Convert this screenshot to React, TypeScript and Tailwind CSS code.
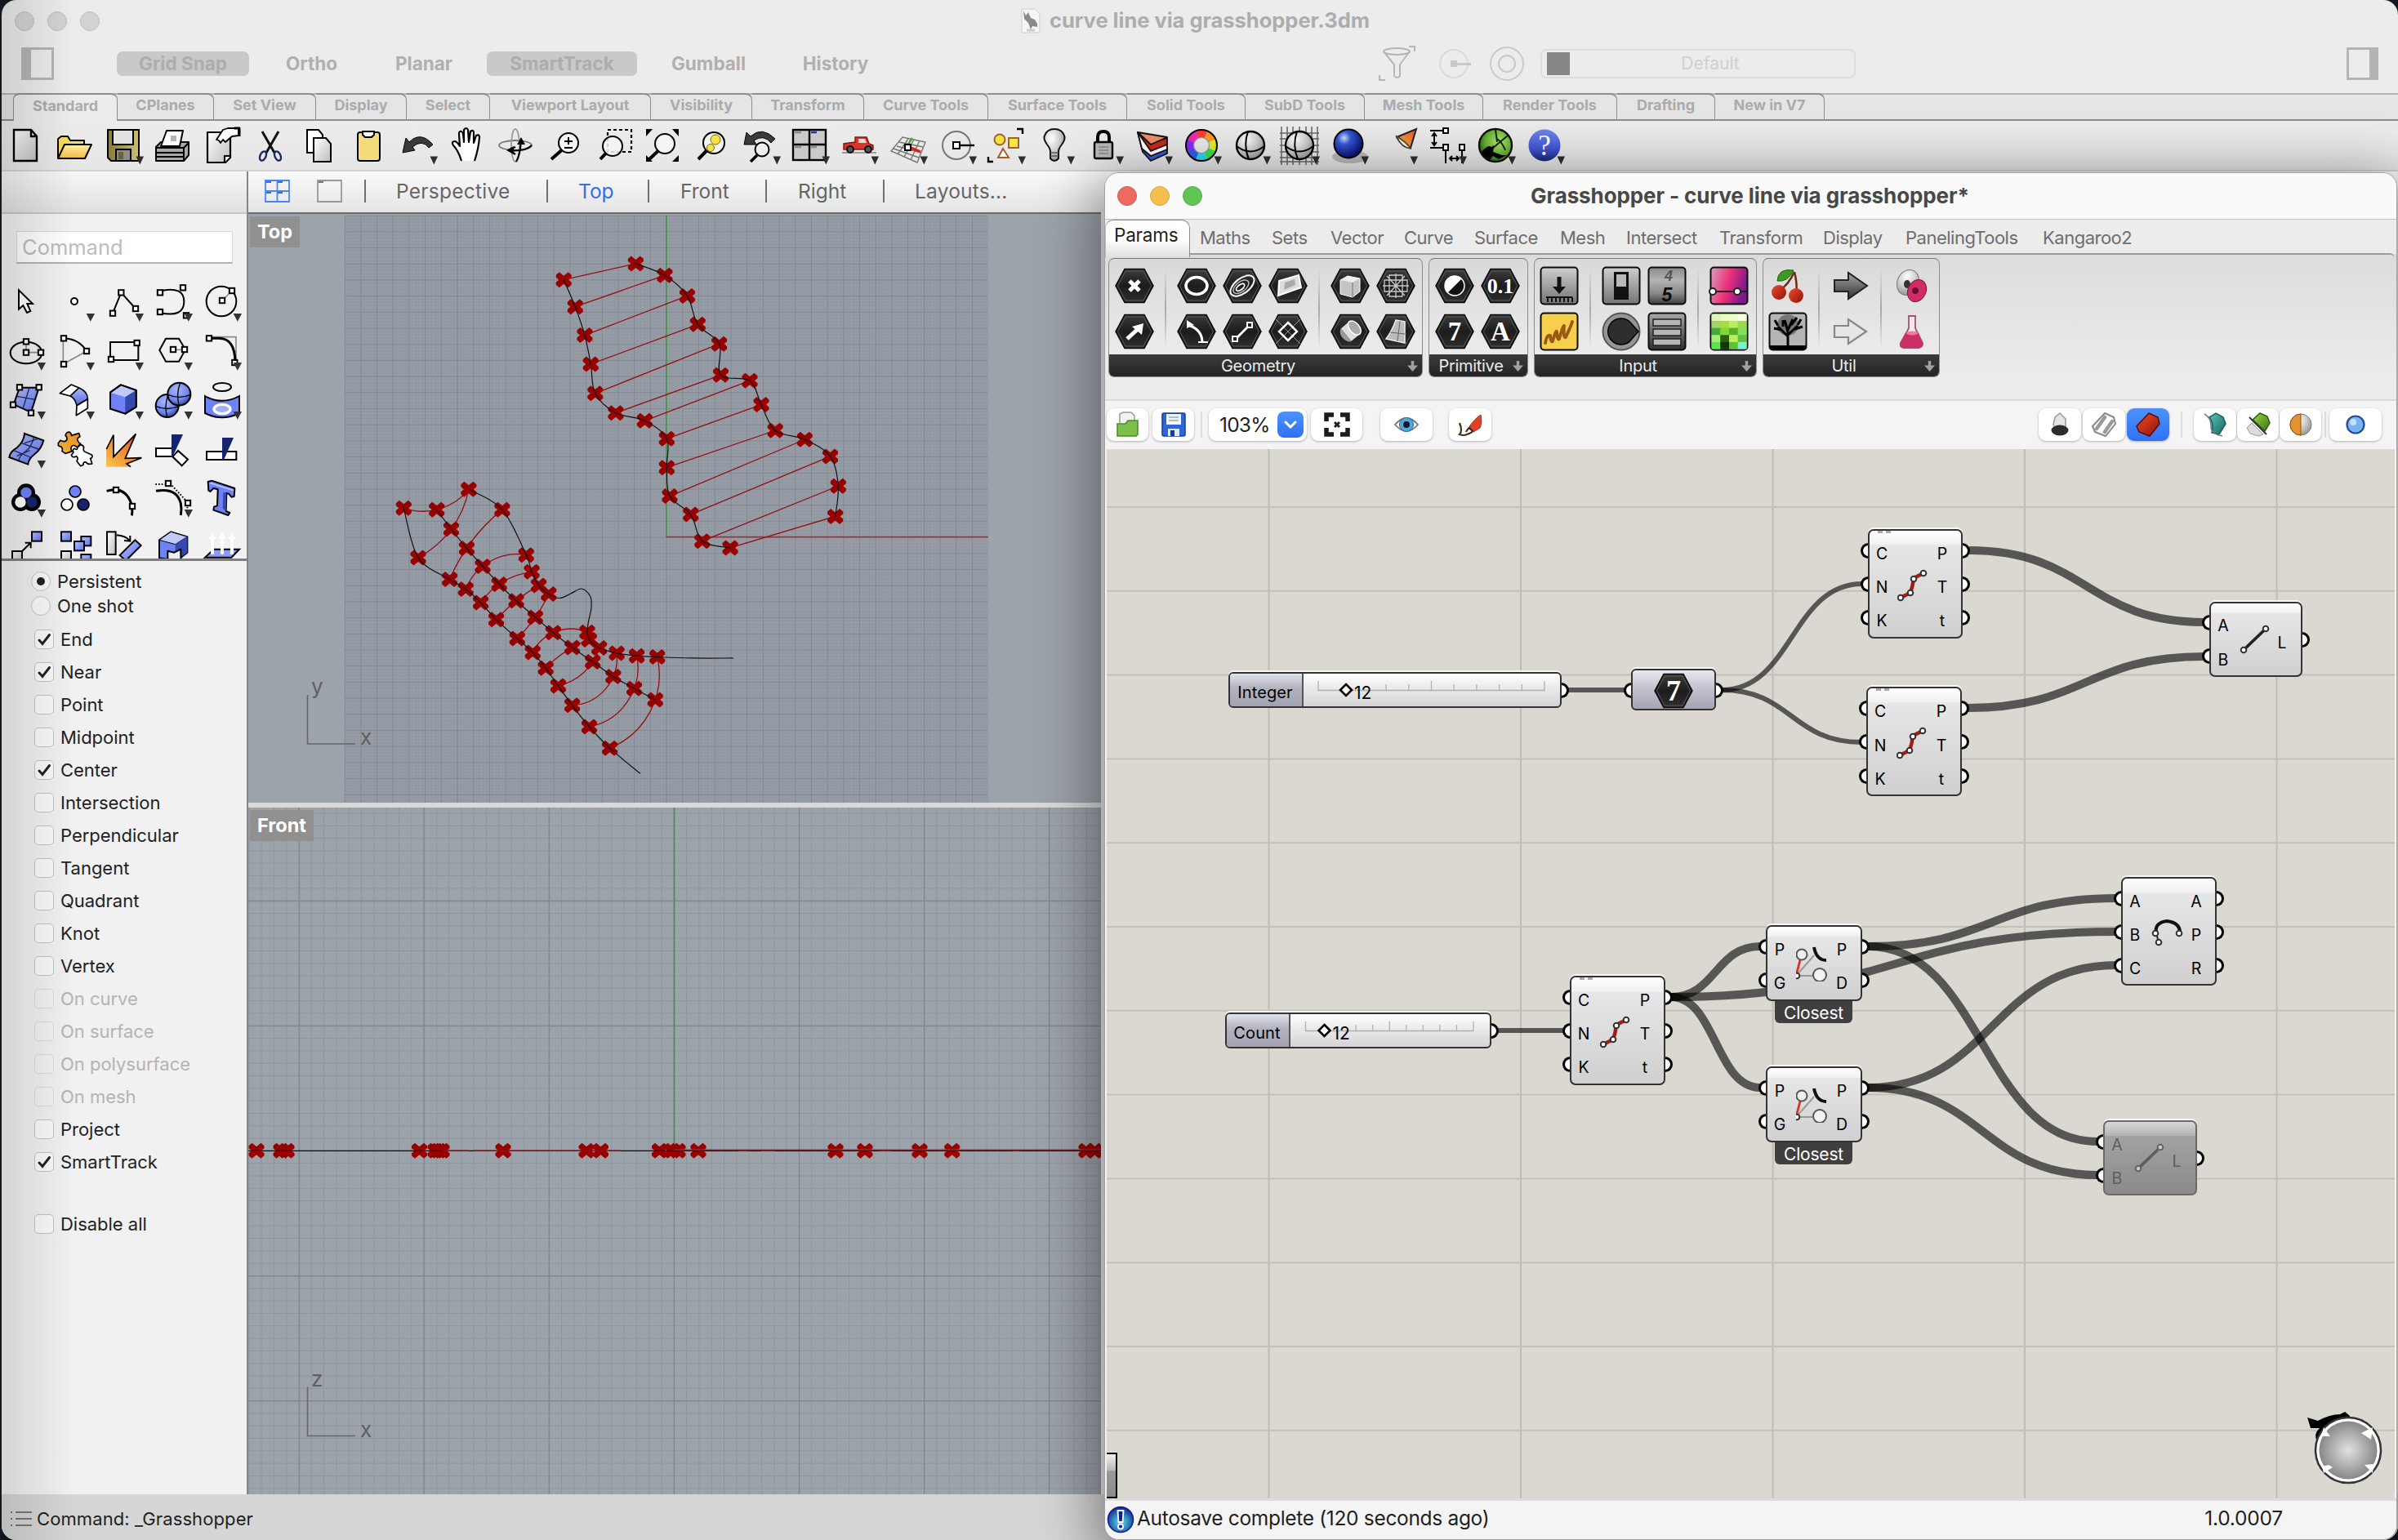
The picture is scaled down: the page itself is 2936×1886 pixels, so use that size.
import React from "react";

type Pt = [number, number];

/* ---------- shared gradients ---------- */

const Defs = () => (
  <svg width="0" height="0" className="absolute">
    <defs>
      <linearGradient id="paper" x1="0" y1="0" x2="1" y2="1"><stop offset="0" stopColor="#fff" /><stop offset="1" stopColor="#bdbdbd" /></linearGradient>
      <linearGradient id="yellow" x1="0" y1="0" x2="0" y2="1"><stop offset="0" stopColor="#fff3a0" /><stop offset="1" stopColor="#f2b84a" /></linearGradient>
      <linearGradient id="olive" x1="0" y1="0" x2="1" y2="0"><stop offset="0" stopColor="#8b7b35" /><stop offset="1" stopColor="#cdbf77" /></linearGradient>
      <linearGradient id="blue" x1="0" y1="0" x2="0" y2="1"><stop offset="0" stopColor="#a9b8ff" /><stop offset="1" stopColor="#5468d8" /></linearGradient>
      <linearGradient id="blueD" x1="0" y1="0" x2="1" y2="1"><stop offset="0" stopColor="#b8c4fb" /><stop offset="1" stopColor="#5b70ee" /></linearGradient>
      <linearGradient id="orange" x1="0" y1="1" x2="1" y2="0"><stop offset="0" stopColor="#f7b733" /><stop offset="1" stopColor="#e8542a" /></linearGradient>
      <linearGradient id="puzzle" x1="0" y1="1" x2="1" y2="0"><stop offset="0" stopColor="#f7b733" /><stop offset="1" stopColor="#ea8a2a" /></linearGradient>
      <linearGradient id="fire" x1="0" y1="1" x2="1" y2="0"><stop offset="0" stopColor="#f9c84a" /><stop offset="0.6" stopColor="#f07a30" /><stop offset="1" stopColor="#d9301c" /></linearGradient>
      <linearGradient id="help" x1="0" y1="0" x2="0" y2="1"><stop offset="0" stopColor="#6f86ef" /><stop offset="0.6" stopColor="#4356d4" /><stop offset="1" stopColor="#1c2674" /></linearGradient>
      <radialGradient id="ball" cx="0.35" cy="0.3" r="0.8"><stop offset="0" stopColor="#fff" /><stop offset="0.5" stopColor="#cfcfcf" /><stop offset="1" stopColor="#8c8c8c" /></radialGradient>
      <radialGradient id="blueball" cx="0.35" cy="0.3" r="0.75"><stop offset="0" stopColor="#cfe0ff" /><stop offset="0.3" stopColor="#3558d8" /><stop offset="1" stopColor="#06095f" /></radialGradient>
      <radialGradient id="sphB" cx="0.4" cy="0.3" r="0.8"><stop offset="0" stopColor="#a9b8ff" /><stop offset="0.6" stopColor="#7088ee" /><stop offset="1" stopColor="#20307f" /></radialGradient>
      <radialGradient id="green" cx="0.6" cy="0.4" r="0.7"><stop offset="0" stopColor="#b8e86a" /><stop offset="0.6" stopColor="#5fae34" /><stop offset="1" stopColor="#1d4a12" /></radialGradient>
      <radialGradient id="knob"><stop offset="0" stopColor="#e2e2e2" /><stop offset="1" stopColor="#888" /></radialGradient>
      <radialGradient id="info" cx="0.5" cy="0.6" r="0.6"><stop offset="0" stopColor="#5fe0e8" /><stop offset="0.6" stopColor="#2a7ab8" /><stop offset="1" stopColor="#10208a" /></radialGradient>
      <linearGradient id="hex" x1="0" y1="0" x2="0" y2="1"><stop offset="0" stopColor="#3c3c3c" /><stop offset="0.5" stopColor="#1c1c1c" /><stop offset="1" stopColor="#2e2e2e" /></linearGradient>
      <linearGradient id="metal" x1="0" y1="0" x2="0" y2="1"><stop offset="0" stopColor="#cfcfcf" /><stop offset="1" stopColor="#747474" /></linearGradient>
      <linearGradient id="darkmetal" x1="0" y1="0" x2="0" y2="1"><stop offset="0" stopColor="#a8a8a8" /><stop offset="1" stopColor="#2e2e2e" /></linearGradient>
      <linearGradient id="digits" x1="0" y1="0" x2="0" y2="1"><stop offset="0" stopColor="#8a8a8a" /><stop offset="0.35" stopColor="#b4b4b4" /><stop offset="0.7" stopColor="#8a8a8a" /><stop offset="1" stopColor="#3c3c3c" /></linearGradient>
      <linearGradient id="pink" x1="0" y1="0" x2="1" y2="0.3"><stop offset="0" stopColor="#d7a3bd" /><stop offset="0.55" stopColor="#ee2f79" /><stop offset="1" stopColor="#7c1a8c" /></linearGradient>
      <linearGradient id="redm" x1="0" y1="0" x2="1" y2="1"><stop offset="0" stopColor="#f04b2c" /><stop offset="1" stopColor="#8e1207" /></linearGradient>
      <linearGradient id="teal" x1="0" y1="0" x2="1" y2="1"><stop offset="0" stopColor="#5cc4ba" /><stop offset="1" stopColor="#16665e" /></linearGradient>
      <linearGradient id="leaf" x1="0" y1="0" x2="1" y2="1"><stop offset="0" stopColor="#9ad848" /><stop offset="1" stopColor="#3a7410" /></linearGradient>
    </defs>
  </svg>
);

/* ---------- main toolbar icons, each drawn around 0,0 in a 60px cell ---------- */

const Lens = ({ x = 5, y = -3, r = 12 }: { x?: number; y?: number; r?: number }) => (
  <>
    <circle cx={x} cy={y} r={r} fill="#f6f6f6" fillOpacity="0.85" stroke="#000" strokeWidth="2" />
    <path d={`M${x - r * 0.7} ${y + r * 0.75}L-16 17`} stroke="#000" strokeWidth="4" />
  </>
);

const Sphere = ({ fill = "url(#ball)" }: { fill?: string }) => (
  <>
    <circle r="17" fill={fill} stroke="#000" strokeWidth="2.4" />
    <path d="M-17 1Q0 14 17 1M-3 -17Q-9 0 -2 17" fill="none" stroke="#000" strokeWidth="2" />
  </>
);

const toolbar: { art: React.ReactNode; menu?: boolean }[] = [
  { art: <path d="M-14 -19H7L14 -11V19H-14Z M7 -19V-11H14" fill="url(#paper)" stroke="#000" strokeWidth="2.4" /> },
  { art: <g stroke="#000" strokeWidth="2" strokeLinejoin="round"><path d="M-20 16V-8L-16 -11H-8L-5 -6H12V-2" fill="#f6dc5e" /><path d="M-20 16L-12 -1H21L13 16Z" fill="url(#yellow)" /></g> },
  { menu: true, art: <g stroke="#000" strokeWidth="2"><path d="M-19 -19H19V19H-15L-19 15Z" fill="url(#olive)" /><rect x="-13" y="-19" width="25" height="18" fill="#e2e2e2" /><rect x="-9" y="5" width="18" height="14" fill="#8c8c8c" /><rect x="-6" y="8" width="6" height="9" fill="#6b6230" stroke="none" /></g> },
  { art: <g stroke="#000" strokeWidth="2" strokeLinejoin="round"><path d="M-20 2L-14 -4H20V12L14 19H-20Z" fill="#a9a9a9" /><path d="M-14 1L-7 -18H13L9 1Z" fill="#fff" /><path d="M-20 3H14V19M14 3L20 -3M-20 9H14M-20 14H14" fill="none" /><rect x="-2" y="-12" width="7" height="7" fill="#b5b5b5" stroke="none" /></g> },
  { art: <g stroke="#000" strokeWidth="2.2" strokeLinejoin="round"><path d="M-17 -16H11V15L5 21H-17Z" fill="url(#paper)" /><path d="M11 13H4V21" fill="#fff" /><path d="M-6 -7L2 -19L8 -21H21V-12L13 -11L5 -4L2 -7L-1 -3L-3 -6Z" fill="#fff" strokeWidth="1.8" /><path d="M16 -21H22V-11" strokeWidth="3" fill="none" /></g> },
  { art: <g fill="none" stroke="#111" strokeWidth="2.4"><path d="M-10 -17L5 9M10 -17L-5 9" strokeWidth="3" /><ellipse cx="-9" cy="13" rx="3.5" ry="6" transform="rotate(25 -9 13)" stroke="#1c2a5e" /><ellipse cx="9" cy="13" rx="3.5" ry="6" transform="rotate(-25 9 13)" stroke="#1c2a5e" /></g> },
  { art: <g stroke="#000" strokeWidth="2" fill="url(#paper)"><path d="M-15 -19H-1L4 -13V9H-15Z" fill="#fff" /><path d="M-7 -9H8L14 -2V20H-7Z" /></g> },
  { art: <g stroke="#000" strokeWidth="2"><rect x="-13" y="-16" width="27" height="35" rx="3" fill="#f6db7e" /><path d="M-7 -17H7V-13L4 -10H-4L-7 -13Z" fill="#fff" /></g> },
  { menu: true, art: <g stroke="#000" strokeWidth="1"><path d="M-18 9L-14 -9L-10 -4Q4 -18 19 -1L14 3Q6 -8 -6 2L-3 6Z" fill="#3a3a3a" /></g> },
  { art: <path d="M-6 19Q-10 6 -16 0Q-19 -5 -14 -5Q-11 -4 -8 1L-9 -14Q-9 -18 -6 -17Q-4 -17 -3 -4L-3 -19Q0 -23 2 -19L3 -4L5 -17Q9 -20 9 -15L9 -3L12 -12Q16 -14 16 -10Q15 4 10 19" fill="#fff" stroke="#000" strokeWidth="2.2" strokeLinejoin="round" /> },
  { art: <g fill="none" strokeWidth="1.8"><ellipse rx="20" ry="6" stroke="#777" /><ellipse rx="5" ry="20" stroke="#999" /><path d="M-8 6Q12 8 20 0M-8 6L0 2M-8 6L0 11M1 20Q6 12 7 -7" stroke="#000" strokeWidth="2.2" /><path d="M2 -1L7 -10L12 -1Z M-11 6L-2 1V11Z" fill="#000" stroke="none" /></g> },
  { art: <><Lens /><path d="M0 -5H10M5 -10V-1M0 3H10" stroke="#000" strokeWidth="2" /></> },
  { art: <><rect x="-7" y="-19" width="29" height="27" fill="none" stroke="#000" strokeWidth="2.2" strokeDasharray="4 3" /><Lens x={-1} y={1} /></> },
  { art: <><Lens x={3} y={-2} /><path d="M-20 -20H-12L-20 -11Z M20 -20H12L20 -11Z M-20 20H-12L-20 12Z M20 20H12L20 12Z" fill="#000" /></> },
  { art: <><Lens x={3} y={-3} r={13} /><circle cx="5" cy="-7" r="6" fill="#f7e24a" stroke="#7a6a10" /><circle cx="-1" cy="3" r="4.5" fill="#f7e24a" stroke="#7a6a10" /></> },
  { menu: true, art: <><path d="M-20 -1L-17 -16L-12 -11Q2 -24 18 -8L13 -3Q4 -14 -8 -6L-5 -1Z" fill="#3a3a3a" stroke="#000" /><circle cx="2" cy="5" r="8.5" fill="#eee" stroke="#000" strokeWidth="2" /><path d="M-4 12L-12 20" stroke="#000" strokeWidth="3.5" /></> },
  { menu: true, art: <><rect x="-20" y="-19" width="40" height="37" fill="#c9c9c9" stroke="#000" strokeWidth="2.4" /><path d="M-20 -1H20M0 -19V18" stroke="#000" strokeWidth="2.4" /><path d="M-18 -16H-10M-18 2H-10M2 2H9" stroke="#888" strokeWidth="2.5" /><path d="M2 -16H9" stroke="#2530b0" strokeWidth="2.5" /></> },
  { menu: true, art: <><path d="M-20 9H22" stroke="#9a9a9a" strokeWidth="2" /><path d="M-18 4V-2L-4 -4V-10H10L13 -2L18 0V5H-18Z" fill="#d8352b" stroke="#8b1610" strokeWidth="1.5" /><path d="M0 -8H8L10 -3H0Z" fill="#f3d5d2" /><circle cx="-10" cy="5" r="4" fill="#555" stroke="#111" strokeWidth="2" /><circle cx="12" cy="5" r="4" fill="#555" stroke="#111" strokeWidth="2" /></> },
  { menu: true, art: <><g stroke="#777" strokeWidth="1.4" fill="none"><path d="M-6 -10L22 -4L12 21L-20 7Z M-10 -4L19 2M-13 1L17 9M-17 4L14 15M1 -8L-12 11M8 -7L-4 14M15 -6L4 18" /></g><path d="M0 0L6 -9" stroke="#43b02a" strokeWidth="2.5" /><path d="M2 2L16 8" stroke="#d8251c" strokeWidth="3.5" /><rect x="-3" y="-1" width="7" height="7" fill="#fff" stroke="#000" strokeWidth="2" /></> },
  { menu: true, art: <><circle r="17" fill="none" stroke="#777" strokeWidth="2" /><path d="M0 0H22" stroke="#000" strokeWidth="2.4" /><rect x="-4" y="-4" width="8" height="8" fill="#fff" stroke="#000" strokeWidth="2" /></> },
  { menu: true, art: <><circle cx="-7" cy="-7" r="6.5" fill="#f5e040" stroke="#a0622a" strokeWidth="2" /><rect x="4" y="-9" width="12" height="12" fill="#f7e447" stroke="#a0622a" strokeWidth="2" /><path d="M-3 4L4 15H-9Z" fill="#fff" stroke="#a0622a" strokeWidth="2" /><path d="M14 -20H21V-14M-21 14V20H-15" fill="none" stroke="#000" strokeWidth="2.4" /></> },
  { menu: true, art: <><path d="M-5 8Q-5 4 -9 -1Q-14 -8 -12 -12Q-9 -20 0 -20Q9 -20 12 -12Q14 -8 9 -1Q5 4 5 8V16Q0 22 -5 16Z" fill="url(#ball)" stroke="#111" strokeWidth="2" /><path d="M-5 9H5M-5 13H5" stroke="#555" strokeWidth="1.6" /></> },
  { menu: true, art: <><path d="M-7 -2V-10Q-7 -17 0 -17Q7 -17 7 -10V-2" fill="none" stroke="#000" strokeWidth="4" /><rect x="-11" y="-4" width="22" height="20" rx="2" fill="#b8b8b8" stroke="#000" strokeWidth="2.4" /><path d="M-6 2H6M-6 6H6M-6 10H6" stroke="#888" strokeWidth="1.6" /></> },
  { menu: true, art: <g stroke="#111" strokeWidth="1.8" strokeLinejoin="round"><path d="M-18 -16L-12 8L-2 19L18 10V2L-2 10Z" fill="#3856d8" /><path d="M-18 -16L-13 4L-2 13L18 5V-1L-2 4Z" fill="#fff" /><path d="M-18 -16L-2 7L18 -1V-9L-2 -2Z" fill="#c72a18" /><path d="M-18 -16L-2 -1L18 -10Z" fill="#f28b66" /></g> },
  { menu: true, art: <><g fill="none" strokeWidth="9">{["#ff3b30", "#ff9a1f", "#e3f02a", "#38e048", "#2ad8e8", "#2a5cf0", "#8a2af0", "#f02ab8"].map((c, i) => { const a = (-90 + i * 45 - 23) * Math.PI / 180, b = (-90 + i * 45 + 23) * Math.PI / 180; return <path key={i} stroke={c} d={`M${14 * Math.cos(a)} ${14 * Math.sin(a)}A14 14 0 0 1 ${14 * Math.cos(b)} ${14 * Math.sin(b)}`} />; })}</g><circle r="19" fill="none" stroke="#000" strokeWidth="2" /><circle r="9.5" fill="none" stroke="#999" strokeWidth="1.2" /></> },
  { menu: true, art: <Sphere /> },
  { menu: true, art: <><path d="M-24 -15H24M-24 -8H24M-24 0H24M-24 8H24M-24 15H24M-24 20H24M-22 -23V24M-15 -23V24M-8 -23V24M0 -23V24M8 -23V24M15 -23V24M22 -23V24" stroke="#666" strokeWidth="1.5" /><Sphere /></> },
  { menu: true, art: <><ellipse cx="2" cy="14" rx="22" ry="8" fill="#000" opacity="0.2" /><circle cy="-2" r="17.5" fill="url(#blueball)" stroke="#000" strokeWidth="2" /></> },
  { menu: true, art: <g transform="translate(7 0)"><path d="M-8 -10L16 -20L9 3Q0 4 -8 -10Z" fill="url(#orange)" stroke="#222" strokeWidth="2" /><path d="M-8 -11Q-3 2 9 4Q4 -4 -8 -11Z" fill="#fff0c8" stroke="#444" strokeWidth="1.5" /></g> },
  { menu: true, art: <g transform="translate(1 0)"><path d="M-21 -18H-2M-21 3H-2M-16 -13V-2M-19 -11L-16 -15L-13 -11M-19 -4L-16 0L-13 -4M-2 4V22M18 4V22M3 16H13M6 13L3 16L6 19M11 13L14 16L11 19" fill="none" stroke="#000" strokeWidth="2" /><path d="M-5 -21H1V-15H-5Z M-5 -1H1V6H-5Z M15 -1H21V6H15Z" fill="#fff" stroke="#000" strokeWidth="2" /></g> },
  { menu: true, art: <><circle r="20" fill="url(#green)" stroke="#111" strokeWidth="2.4" /><path d="M0 -19L2 -4M15 -12L-4 4M2 -8Q8 -4 12 6" stroke="#0b2a06" strokeWidth="2" fill="none" /><path d="M-18 9Q-9 -2 -5 2L-2 0L-3 8L8 12L14 12L4 17L-3 13L-8 19Z" fill="#000" /></> },
  { menu: true, art: <><circle r="19.5" fill="url(#help)" /><text x="0" y="12" textAnchor="middle" fontSize="35" fill="#fff" fontFamily="Liberation Serif, serif">?</text></> },
];

const Toolbar = () => (
  <div className="flex h-[60px] bg-gradient-to-b from-[#ececec] to-[#e6e6e6]">
    {toolbar.map((t, i) => (
      <svg key={i} className="-ml-px mr-px h-[60px] w-[60px] shrink-0" viewBox="-30 -30 60 60">
        {t.art}
        {t.menu && <path d="M15.5 13.5H25L20.3 23.5Z" fill="#2d2d2d" />}
      </svg>
    ))}
  </div>
);

/* ---------- tool palette; each cell shows its own 180-unit tile ---------- */

const H = ({ p }: { p: Pt }) => <rect x={p[0] - 9.5} y={p[1] - 9.5} width="19" height="19" fill="#fff" stroke="#000" strokeWidth="6" />;
const S = { fill: "none", stroke: "#000", strokeWidth: 6 } as const;
const G = { fill: "none", stroke: "#8a8a8a", strokeWidth: 5 } as const;

const palette: { art: React.ReactNode; menu?: boolean }[] = [
  { art: <path d="M69 466V536L85 522L99 549L112 543L100 516H120Z" fill="#fff" stroke="#000" strokeWidth="6" /> },
  { menu: true, art: <circle cx="273" cy="507" r="12" fill="#fff" stroke="#000" strokeWidth="6" /> },
  { menu: true, art: <><path d="M414 551L445 475L498 534" {...S} /><H p={[414, 551]} /><H p={[445, 475]} /><H p={[498, 534]} /></> },
  { menu: true, art: <><path d="M588 469Q676 450 676 508Q676 568 588 549" {...S} /><H p={[588, 475]} /><H p={[672, 457]} /><H p={[588, 546]} /><H p={[684, 559]} /></> },
  { menu: true, art: <><circle cx="813" cy="507" r="55" {...S} /><path d="M816 504L852 468" {...G} /><H p={[816, 504]} /><H p={[852, 468]} /></> },
  { menu: true, art: <><ellipse cx="96" cy="696" rx="58" ry="40" {...S} /><path d="M96 655V695H150" {...G} /><H p={[96, 655]} /><H p={[96, 695]} /><H p={[150, 695]} /></> },
  { menu: true, art: <><path d="M232 645V738L318 690" {...G} /><path d="M234 643Q290 645 318 690" {...S} /><H p={[234, 643]} /><H p={[318, 690]} /><H p={[234, 738]} /></> },
  { menu: true, art: <><rect x="405" y="657" width="103" height="66" {...S} /><H p={[503, 660]} /><H p={[408, 720]} /></> },
  { menu: true, art: <><path d="M609 644H657L681 684L657 728H609L586 686Z" {...S} /><path d="M636 685H678" {...G} /><H p={[636, 684]} /><H p={[678, 684]} /></> },
  { menu: true, art: <><path d="M770 638H867V733" {...G} /><path d="M768 643H800Q864 640 864 733" {...S} strokeWidth={9} /><H p={[768, 643]} /><H p={[862, 732]} /></> },
  { menu: true, art: <><path d="M72 824H143L114 915L50 886Z" fill="url(#blueD)" stroke="#000" strokeWidth="6" /><path d="M108 824L84 902M62 856L130 868" stroke="#1b2763" strokeWidth="4" /><H p={[72, 823]} /><H p={[143, 823]} /><H p={[48, 887]} /><H p={[114, 917]} /></> },
  { menu: true, art: <g stroke="#000" strokeWidth="5" strokeLinejoin="round"><path d="M220 845L262 813L290 825L258 855Z" fill="#fff" /><path d="M258 855L290 825Q322 838 322 866L282 890Q275 862 258 855Z" fill="url(#blue)" /><path d="M282 890L322 866V900L280 926Z" fill="#fff" /></g> },
  { menu: true, art: <g stroke="#000" strokeWidth="6" strokeLinejoin="round"><path d="M405 842L444 814L500 834V895L460 920L405 902Z" fill="#6c82f6" /><path d="M405 842L444 814L500 834L460 859Z" fill="#bfcafb" stroke="none" /><path d="M460 859L500 834V895L460 920Z" fill="#3548b0" stroke="none" /><path d="M405 842L444 814L500 834V895L460 920L405 902Z" fill="none" /></g> },
  { menu: true, art: <><circle cx="614" cy="891" r="42" fill="url(#sphB)" stroke="#000" strokeWidth="6" /><path d="M573 893Q614 910 656 893M618 850Q602 890 614 932" {...S} strokeWidth={4} /><circle cx="658" cy="848" r="42" fill="url(#sphB)" stroke="#000" strokeWidth="6" /><path d="M617 850Q658 868 700 850M662 806Q646 848 658 890" {...S} strokeWidth={4} /></> },
  { menu: true, art: <><ellipse cx="816" cy="822" rx="33" ry="15" {...S} /><path d="M753 855Q816 890 879 855V918Q816 950 753 918Z" fill="#6c82f6" stroke="#000" strokeWidth="6" /><ellipse cx="816" cy="903" rx="30" ry="17" fill="#9fb0f8" stroke="#fff" strokeWidth="10" /></> },
  { menu: true, art: <><path d="M90 993L160 1018Q152 1050 128 1068Q105 1085 103 1106L34 1080Q36 1060 62 1045Q88 1022 90 993Z" fill="url(#blueD)" stroke="#000" strokeWidth="6" /><path d="M124 1006Q118 1040 94 1058Q72 1074 68 1092M78 1028L142 1050M50 1055L112 1080M90 1028L140 1012M62 1075L110 1055" fill="none" stroke="#1b2763" strokeWidth="4" /></> },
  { art: <g stroke="#000" strokeWidth="5" strokeLinejoin="round"><path d="M240 1000Q246 984 256 988Q264 994 262 1000L290 992L294 1004Q280 1010 286 1020Q290 1028 296 1030L284 1044Q270 1030 262 1042Q258 1052 266 1058L240 1066L228 1058Q232 1044 222 1040Q212 1040 214 1028L222 1018Q236 1026 244 1018Q250 1008 240 1000Z" fill="url(#puzzle)" /><path d="M284 1044L296 1034Q306 1036 308 1044Q304 1056 312 1060L338 1072Q342 1082 332 1084L338 1104Q322 1108 316 1098Q304 1096 306 1108L296 1112L282 1094Q290 1082 280 1076Q266 1084 262 1072L270 1062Q264 1052 274 1048Q286 1056 284 1044Z" fill="#fff" /></g> },
  { art: <><path d="M390 1050L417 998V1078L499 994L460 1084L520 1082L468 1104L482 1115H390Z" fill="url(#fire)" /><path d="M391 1050L417 998V1078L499 994L460 1084L520 1082L465 1104L480 1115" {...S} strokeWidth={5} /></> },
  { art: <><rect x="573" y="1047" width="60" height="30" fill="#fff" stroke="#000" strokeWidth="6" /><path d="M634 1078L654 1056L690 1088L668 1111Z" fill="#fff" stroke="#000" strokeWidth="6" /><path d="M630 996H672L634 1078H630Z" fill="#15246e" /></> },
  { art: <><rect x="759" y="1059" width="109" height="30" fill="#fff" stroke="#000" strokeWidth="6" /><path d="M816 1008H858L822 1090H816Z" fill="#15246e" /></> },
  { menu: true, art: <><g stroke="#000" strokeWidth="22"><circle cx="96" cy="1210" r="22" /><circle cx="75" cy="1245" r="22" /><circle cx="117" cy="1245" r="22" /></g><circle cx="75" cy="1245" r="20" fill="#fff" /><circle cx="117" cy="1245" r="20" fill="#15246e" /><circle cx="96" cy="1210" r="20" fill="#6c82f6" /></> },
  { art: <g stroke="#000" strokeWidth="5"><circle cx="276" cy="1206" r="21" fill="#6c82f6" /><circle cx="246" cy="1254" r="21" fill="#fff" /><circle cx="306" cy="1254" r="21" fill="#15246e" /></g> },
  { art: <><path d="M392 1204Q460 1185 482 1250Q488 1275 484 1294" {...S} strokeWidth={9} /><H p={[426, 1200]} /><H p={[486, 1260]} /></> },
  { menu: true, art: <><path d="M573 1204Q650 1190 664 1250Q668 1270 664 1293" {...S} strokeWidth={9} /><path d="M571 1179H605M632 1184L680 1236M688 1262V1290" {...S} strokeDasharray="5 6" /><H p={[618, 1176]} /><H p={[690, 1248]} /></> },
  { art: <g stroke="#000" strokeWidth="6" strokeLinejoin="round"><path d="M764 1170L778 1166L862 1194L860 1224L850 1226L840 1214L832 1212L830 1278L844 1284L838 1293L784 1274L786 1262L798 1258L800 1198L784 1194L772 1206L766 1202Z" fill="#6c82f6" /><path d="M820 1208L832 1212L830 1278L818 1268Z" fill="#3548b0" stroke="none" /><path d="M770 1174L858 1202" stroke="#b8c4fb" strokeWidth="5" /></g> },
  { menu: true, art: <><rect x="45" y="1425" width="36" height="34" fill="url(#paper)" stroke="#000" strokeWidth="6" /><rect x="117" y="1354" width="36" height="34" fill="url(#blueD)" stroke="#000" strokeWidth="6" /><path d="M82 1424L112 1395M92 1394H113V1414" {...S} /></> },
  { art: <g stroke="#000" strokeWidth="6" fill="url(#blueD)"><rect x="225" y="1354" width="36" height="34" /><rect x="298" y="1371" width="36" height="34" /><rect x="273" y="1389" width="36" height="34" /><rect x="225" y="1425" width="36" height="34" fill="url(#paper)" /><rect x="298" y="1437" width="36" height="34" /></g> },
  { art: <><rect x="393" y="1354" width="32" height="83" fill="url(#paper)" stroke="#000" strokeWidth="6" /><path d="M440 1440L496 1384L518 1404L462 1460Z" fill="url(#blueD)" stroke="#000" strokeWidth="6" /><path d="M428 1366Q460 1368 476 1386M478 1368V1388L456 1386" {...S} /></> },
  { menu: true, art: <g stroke="#000" strokeWidth="6" strokeLinejoin="round"><path d="M585 1384L628 1354L688 1372V1430L650 1460L585 1450Z" fill="#6c82f6" /><path d="M585 1384L628 1354L688 1372L644 1400Z" fill="#bfcafb" strokeWidth="3" /><path d="M644 1400L688 1372V1430L644 1460Z" fill="#3548b0" stroke="none" /><path d="M616 1460V1424L640 1430L664 1418V1460Z" fill="#eee" /></g> },
  { menu: true, art: <><path d="M753 1448L786 1418H879L850 1448Z" fill="#8c9df8" stroke="#000" strokeWidth="6" /><path d="M780 1436V1370M816 1436V1370M852 1436V1370" stroke="#fff" strokeWidth="12" /><path d="M766 1380L780 1356L794 1380Z M802 1380L816 1356L830 1380Z M838 1380L852 1356L866 1380Z" fill="#fff" /></> },
];

const Palette = () => (
  <div className="grid h-[345px] grid-cols-[repeat(5,60px)] grid-rows-[repeat(6,60px)] overflow-hidden">
    {palette.map((t, i) => {
      const c = i % 5, r = Math.floor(i / 5);
      return (
        <svg key={i} className="h-[60px] w-[60px] overflow-visible" viewBox={`${6 + 180 * c} ${417 + 180 * r} 180 180`}>
          {t.art}
          {t.menu && <path d={`M${137 + 180 * c} ${552 + 180 * r}h31l-15.500 29z`} fill="#333" />}
        </svg>
      );
    })}
  </div>
);

/* ---------- object snaps ---------- */

const snaps: [string, boolean, boolean?][] = [
  ["End", true], ["Near", true], ["Point", false], ["Midpoint", false], ["Center", true], ["Intersection", false],
  ["Perpendicular", false], ["Tangent", false], ["Quadrant", false], ["Knot", false], ["Vertex", false],
  ["On curve", false, true], ["On surface", false, true], ["On polysurface", false, true], ["On mesh", false, true],
  ["Project", false], ["SmartTrack", true],
];

const Check = ({ label, on, off }: { label: string; on?: boolean; off?: boolean }) => (
  <div className="flex h-10 items-center pl-[40px]">
    <span className={`flex h-6 w-6 items-center justify-center rounded-[5px] border ${off ? "border-[#dcdcdc] bg-[#f3f3f3]" : "border-[#c4c4c4] bg-[#fafafa]"}`}>
      {on && <svg width="18" height="18" viewBox="0 0 18 18"><path d="M3 10L7 14.500L15.500 3.500" fill="none" stroke="#222" strokeWidth="3" strokeLinecap="round" /></svg>}
    </span>
    <span className={`ml-[8px] text-[22px] leading-6 tracking-[-0.02px] ${off ? "text-[#b4b4b4]" : "text-[#222]"}`}>{label}</span>
  </div>
);

const Radio = ({ label, on }: { label: string; on?: boolean }) => (
  <div className="flex h-[30px] items-center pl-[36px]">
    <span className="flex h-6 w-6 items-center justify-center rounded-full border border-[#c4c4c4] bg-[#fafafa]">{on && <i className="h-[10px] w-[10px] rounded-full bg-[#222]" />}</span>
    <span className="ml-[8px] text-[22px] leading-6 tracking-[-0.02px] text-[#222]">{label}</span>
  </div>
);

/* ---------- viewports ---------- */

const sx = (p: Pt): Pt => [p[0] / 1.6333 + 96, p[1] / 2.1778 - 2];

const railA: Pt[] = ([[474, 180], [497, 252], [516, 328], [528, 405], [537, 483], [578, 535], [636, 556], [680, 604], [680, 681], [686, 757], [728, 806], [751, 877], [807, 895]] as Pt[]).map(sx);
const railB: Pt[] = ([[618, 137], [676, 168], [721, 223], [742, 299], [785, 351], [788, 434], [846, 449], [869, 513], [897, 582], [956, 606], [1007, 651], [1023, 730], [1017, 811]] as Pt[]).map(sx);
const low: Pt[] = ([[154, 789], [183, 921], [246, 979], [278, 1005], [308, 1041], [339, 1086], [381, 1137], [412, 1174], [438, 1216], [463, 1263], [491, 1315], [525, 1372], [566, 1429]] as Pt[]).map(sx);
const mid: Pt[] = ([[220, 793], [249, 845], [280, 896], [312, 944], [345, 992], [379, 1036], [417, 1080], [453, 1121], [491, 1161], [532, 1199], [573, 1238], [615, 1270], [657, 1300]] as Pt[]).map(sx);
const top: Pt[] = ([[284, 739], [284, 739], [351, 793], [399, 914], [410, 959], [424, 995], [444, 1018], [521, 1120], [525, 1140], [545, 1162], [580, 1176], [620, 1183], [661, 1186]] as Pt[]).map(sx);
const bump: Pt[] = ([[466, 1029], [488, 1017], [510, 1004], [527, 1024], [529, 1055], [523, 1095]] as Pt[]).map(sx);

const spline = (p: Pt[]) => {
  let d = `M${p[0][0]} ${p[0][1]}`;
  for (let i = 0; i < p.length - 1; i++) {
    const a = p[Math.max(0, i - 1)], b = p[i], c = p[i + 1], e = p[Math.min(p.length - 1, i + 2)];
    d += `C${b[0] + (c[0] - a[0]) / 6} ${b[1] + (c[1] - a[1]) / 6} ${c[0] - (e[0] - b[0]) / 6} ${c[1] - (e[1] - b[1]) / 6} ${c[0]} ${c[1]}`;
  }
  return d;
};

const arc3 = (a: Pt, b: Pt, c: Pt) => {
  const d = 2 * (a[0] * (b[1] - c[1]) + b[0] * (c[1] - a[1]) + c[0] * (a[1] - b[1]));
  const q = (p: Pt) => p[0] * p[0] + p[1] * p[1];
  const ux = (q(a) * (b[1] - c[1]) + q(b) * (c[1] - a[1]) + q(c) * (a[1] - b[1])) / d;
  const uy = (q(a) * (c[0] - b[0]) + q(b) * (a[0] - c[0]) + q(c) * (b[0] - a[0])) / d;
  const r = Math.hypot(a[0] - ux, a[1] - uy);
  return `M${a[0]} ${a[1]}A${r} ${r} 0 0 ${d > 0 ? 1 : 0} ${c[0]} ${c[1]}`;
};

const Cross = ({ p }: { p: Pt }) => (
  <path transform={`translate(${p[0]} ${p[1]})`} d="M-5.500 -9.500L0 -5L5.500 -9.500L9.500 -6V-3L6 0L9.500 3V6L5.500 9.500L0 5L-5.500 9.500L-9.500 6V3L-6 0L-9.500 -3V-6Z" fill="#990000" />
);

const Axes = ({ y, v }: { y: number; v: string }) => (
  <g fill="#606060" fontSize="26" fontFamily="Inter, sans-serif">
    <path d={`M72.500 ${y - 60}V${y}H131`} fill="none" stroke="#666" strokeWidth="1.600" />
    <text x="77" y={y - 61}>{v}</text>
    <text x="137" y={y + 1}>x</text>
  </g>
);

const TopView = () => (
  <svg className="block h-full w-full" viewBox="0 0 1044 721">
    <defs>
      <pattern id="fine" x="117.6" y="1.6" width="3.94" height="3.94" patternUnits="userSpaceOnUse"><path d="M0 0.500H3.940M0.500 0V3.940" stroke="#868b95" strokeWidth="0.900" opacity="0.4" /></pattern>
      <pattern id="cell" x="117.6" y="1.6" width="19.7" height="19.7" patternUnits="userSpaceOnUse"><path d="M0 0.500H19.700M0.500 0V19.700" stroke="#83878f" strokeWidth="1.100" /></pattern>
    </defs>
    <rect x="117.6" y="1.6" width="788" height="720" fill="#979da6" />
    <rect x="117.6" y="1.6" width="788" height="720" fill="url(#fine)" />
    <rect x="117.6" y="1.6" width="788" height="720" fill="url(#cell)" />
    <path d="M511.800 2V395.600" stroke="#3f9a45" strokeWidth="1.800" />
    <path d="M511.800 395.600H905.600" stroke="#96393f" strokeWidth="1.800" />
    <g fill="none" stroke="#990d10" strokeWidth="1.300">
      {railA.map((a, i) => <path key={i} d={`M${a[0]} ${a[1]}L${railB[i][0]} ${railB[i][1]}`} />)}
      {low.map((a, i) => <path key={i} d={arc3(a, mid[i], top[i])} />)}
    </g>
    {[...railA, ...railB, ...low, ...mid, ...top.slice(1)].map((p, i) => <Cross key={i} p={p} />)}
    <g fill="none" stroke="#111" strokeWidth="1.200">
      <path d={spline(railA)} />
      <path d={spline(railB)} />
      <path d={spline([...low, sx([627, 1497])])} />
      <path d={spline(mid)} />
      <path d={spline([...top.slice(1, 7), ...bump, ...top.slice(7), sx([730, 1189]), sx([813, 1189])])} />
    </g>
    <Axes y={649} v="y" />
  </svg>
);

const frontX = [314, 344, 351, 513.5, 533, 537, 541, 616, 718, 735.5, 807.5, 823, 830, 855, 1023, 1059, 1126, 1165.7, 1330, 1340];

const FrontView = () => (
  <svg className="block h-full w-full" viewBox="0 0 1044 841">
    <defs>
      <pattern id="minor" x="61.5" y="113.7" width="15.31" height="15.31" patternUnits="userSpaceOnUse"><path d="M0 0.500H15.310M0.500 0V15.310" stroke="#8f959e" strokeWidth="1" /></pattern>
      <pattern id="major" x="61.5" y="113.7" width="153.1" height="153.1" patternUnits="userSpaceOnUse"><path d="M0 0.600H153.100M0.600 0V153.100" stroke="#7f838c" strokeWidth="1.300" /></pattern>
    </defs>
    <rect width="1044" height="841" fill="url(#minor)" />
    <rect width="1044" height="841" fill="url(#major)" />
    <path d="M521.500 0V420" stroke="#3f9a45" strokeWidth="1.600" />
    {frontX.map((x, i) => <Cross key={i} p={[x - 304, 420.300]} />)}
    <path d="M521.500 419.300H1044" stroke="#96393f" strokeWidth="1.600" />
    <path d="M0 420.300H1044" stroke="#111" strokeWidth="1.300" />
    <path d="M237 420.300H270M276 420.300H456M600 420.300H610M628 420.300H644M774 420.300H786M936 420.300H944" stroke="#990d10" strokeWidth="1.500" />
    <Axes y={769.500} v="z" />
  </svg>
);

const ViewLabel = ({ children }: { children: string }) => (
  <div className="absolute left-[2px] top-[3px] h-[38px] bg-[#909090] px-[9px] text-[23.5px] font-bold leading-[38px] text-white">{children}</div>
);

/* ---------- ribbon icons ---------- */

const Hex = ({ children }: { children?: React.ReactNode }) => (
  <>
    <path d="M-12 -20.500H12L23 0L12 20.500H-12L-23 0Z" fill="url(#hex)" stroke="#0c0c0c" strokeWidth="1.500" />
    <path d="M-11 -18H11L20.500 0L11 18H-11L-20.500 0Z" fill="none" stroke="#5a5a5a" strokeWidth="1" />
    {children}
  </>
);
const W = { fill: "none", stroke: "#fff", strokeWidth: 3 } as const;
const Box = ({ fill, children }: { fill: string; children?: React.ReactNode }) => (
  <><rect x="-22.5" y="-22.5" width="45" height="45" rx="4" fill={fill} stroke="#0c0c0c" strokeWidth="2" />{children}</>
);

const geo = [
  [[<Hex><path d="M-6 -6L6 6M6 -6L-6 6" {...W} strokeWidth={5} /></Hex>, <Hex><path d="M-9 9L4 -3" {...W} strokeWidth={5} /><path d="M11 -10L9 4L-3 -6Z" fill="#fff" /></Hex>]],
  [
    [<Hex><ellipse rx="13" ry="10.5" {...W} strokeWidth={3.5} /></Hex>, <Hex><path d="M-8 -7Q6 -2 7 12" {...W} /><path d="M-12 -4V-14L-3 -8Z" fill="#fff" /><path d="M2 13H14" {...W} strokeWidth={2} /></Hex>],
    [<Hex><g transform="rotate(-38)"><ellipse rx="17" ry="9" {...W} strokeWidth={2} /><ellipse cx="-2" rx="11" ry="6" {...W} strokeWidth={1.5} opacity={0.7} /><ellipse cx="-3" rx="6" ry="3" {...W} strokeWidth={1.8} /></g></Hex>, <Hex><path d="M-8 9L8 -7" {...W} /><rect x="-12" y="6" width="6" height="6" fill="#222" stroke="#fff" strokeWidth="2" /><rect x="6" y="-11" width="6" height="6" fill="#222" stroke="#fff" strokeWidth="2" /></Hex>],
    [<Hex><path d="M-11 -6L13 -13L16 2L-12 12Z" fill="#ddd" stroke="#fff" strokeWidth="2" /><path d="M-4 -4L8 -8L9 -1L-5 5Z" fill="#aaa" /></Hex>, <Hex><path d="M0 -11L11 0L0 11L-11 0Z" {...W} strokeWidth={2.5} /><path d="M-15 -15L15 15M15 -15L-15 15" {...W} strokeWidth={1} opacity={0.5} /></Hex>],
  ],
  [
    [<Hex><path d="M-12 -7L-3 -12L12 -9V7L3 14L-12 10Z" fill="#c4c4c4" stroke="#fff" /><path d="M-12 -7L3 -4L12 -9L-3 -12Z" fill="#eee" /><path d="M3 -4V14" stroke="#777" fill="none" /></Hex>, <Hex><g transform="rotate(-40)"><ellipse cx="-6" rx="6" ry="10" fill="#999" /><rect x="-6" y="-10" width="13" height="20" fill="#ddd" /><ellipse cx="7" rx="6" ry="10" fill="#aaa" stroke="#fff" strokeWidth="1.500" /></g></Hex>],
    [<Hex><path d="M0 -15V15M-16 0H16M-11 -12L11 12M11 -12L-11 12M-8 -13H8V13H-8ZM-14 -7H14V7H-14Z" {...W} strokeWidth={1.3} opacity={0.75} /></Hex>, <Hex><path d="M0 -14L11 -12V14L-12 9Q-5 0 0 -14Z" fill="#bbb" stroke="#eee" strokeWidth="1.500" /><path d="M-7 1L11 3M5 -13L2 12" stroke="#666" /></Hex>],
  ],
];

const GlyphHex = ({ t, s }: { t: string; s: number }) => (
  <Hex><text y={s * 0.34} textAnchor="middle" fontSize={s} fill="#fff" fontWeight="bold" fontFamily="Liberation Serif, serif">{t}</text></Hex>
);

const prim = [[
  [<Hex><circle r="12" fill="#fff" /><path d="M8.500 -8.500A12 12 0 0 1 -8.500 8.500Z" fill="#111" /><circle r="12" {...W} strokeWidth={1.5} /></Hex>, <GlyphHex t="7" s={33} />],
  [<GlyphHex t="0.1" s={26} />, <GlyphHex t="A" s={33} />],
]];

const greens = ["#dff3b8", "#e9ffc0", "#eaffc8", "#f2ffe0", "#a2d468", "#a6de40", "#bcec60", "#9fd84a", "#4aa838", "#7ed83a", "#58b030", "#86e05a", "#9ff070", "#2a6010", "#b8f060", "#62c048", "#58e848", "#103808", "#58c830", "#7af0d0"];

const input = [
  [[
    <Box fill="url(#metal)"><path d="M0 -11V2" stroke="#111" strokeWidth="5" /><path d="M-8 1H8L0 10Z" fill="#111" /><path d="M-16 14H16M-14 14V20M-9 14V20M-4 14V20M1 14V20M6 14V20M11 14V20M16 14V20" stroke="#111" strokeWidth="2" /></Box>,
    <Box fill="#f6cf4c"><path d="M-17 14Q-15 3 -11 5Q-10 14 -8 12Q-4 -2 -3 0Q-2 12 0 9Q5 -8 6 -7Q5 9 8 7Q15 -8 16 -12" fill="none" stroke="#9a5a14" strokeWidth="3.800" strokeLinecap="round" /></Box>,
  ]],
  [
    [<Box fill="url(#metal)"><rect x="-9" y="-17" width="18" height="34" fill="#111" /><rect x="-6" y="-14" width="12" height="15" fill="#b8b8b8" /></Box>, <><circle r="22.500" fill="#959595" stroke="#555" strokeWidth="2" /><path d="M0 -16A16 16 0 1 0 13 9L21 0L13 -9A16 16 0 0 0 0 -16Z" fill="#2e2e2e" stroke="#000" strokeWidth="1.500" /></>],
    [<Box fill="url(#digits)"><text x="2" y="-6" textAnchor="middle" fontSize="18" fontStyle="italic" fontWeight="bold" fill="#555" fontFamily="Liberation Sans, sans-serif">4</text><text y="19" textAnchor="middle" fontSize="23" fontStyle="italic" fontWeight="bold" fill="#0c0c0c" fontFamily="Liberation Sans, sans-serif">5</text></Box>, <Box fill="url(#darkmetal)"><path d="M-17 -15H17V-7H-17ZM-17 -3H17V5H-17ZM-17 9H17V17H-17Z" fill="#b5b5b5" stroke="#222" strokeWidth="1.500" /></Box>],
  ],
  [[
    <Box fill="url(#pink)"><path d="M-22 7H22" stroke="#222" strokeWidth="2" /><circle cx="10" cy="7" r="4" fill="#fff" stroke="#222" strokeWidth="2" /><circle cx="-20" cy="7" r="4" fill="#fff" stroke="#222" strokeWidth="2" /></Box>,
    <Box fill="#7ac840">{greens.map((c, i) => <rect key={i} x={-21.500 + (i % 4) * 10.750} y={-21.500 + Math.floor(i / 4) * 8.600} width="10.900" height="8.700" fill={c} />)}</Box>,
  ]],
];

const util = [
  [[
    <><path d="M8 -17Q0 0 -11 6M8 -17Q12 -2 10 10" fill="none" stroke="#6b2a14" strokeWidth="2.500" /><path d="M7 -19Q-12 -22 -13 -6Q0 -4 7 -19Z" fill="#3f9a22" stroke="#1d5a10" /><circle cx="-11" cy="8" r="9" fill="url(#redm)" /><circle cx="10" cy="12" r="9" fill="url(#redm)" /></>,
    <Box fill="#b5b5b5"><path d="M-22 17H22V22H-22Z" fill="#000" /><path d="M0 18V0M0 6L-12 -6M0 4L12 -7M0 0L-4 -14M0 -2L6 -15M-8 -2L-17 -4M9 -3L18 -6M-6 -6V-14M-12 -7L-16 -14M12 -8L16 -15M4 -8L11 -17" stroke="#000" strokeWidth="3" fill="none" /><circle cy="-8" r="13" fill="#000" opacity="0.350" /></Box>,
  ]],
  [[
    <path d="M-19 -7H-2V-16L21 0L-2 16V7H-19Z" fill="url(#darkmetal)" stroke="#222" strokeWidth="2" />,
    <path d="M-19 -7H-2V-15L20 0L-2 15V7H-19Z" fill="#e6e6e6" stroke="#888" strokeWidth="2.200" />,
  ]],
  [[
    <><ellipse cx="-5" cy="-4" rx="13" ry="16" transform="rotate(25 -5 -4)" fill="url(#ball)" stroke="#777" /><ellipse cx="-6" cy="-2" rx="4" ry="5" fill="#333" /><ellipse cx="6" cy="6" rx="11" ry="14" transform="rotate(25 6 6)" fill="#cf2d68" stroke="#8b1540" /><circle cx="4" cy="6" r="4" fill="#6a0c30" /></>,
    <><path d="M-4 -19H4V-4L13 14Q14 19 8 20H-10Q-16 19 -14 14L-4 -4Z" fill="#f5e6ec" stroke="#9a5570" strokeWidth="1.800" /><path d="M-8 2H8L13 14Q14 19 8 20H-10Q-16 19 -14 14Z" fill="#cc2f68" /><ellipse cy="2" rx="7" ry="2.500" fill="#f07aa0" /></>,
  ]],
];

const Panel = ({ label, groups, width, pad }: { label: string; groups: React.ReactNode[][][]; width: string; pad: string }) => (
  <div className={`flex h-[146px] flex-col overflow-hidden rounded-[7px] border-[1.5px] border-[#8c8c8c] border-t-[#777] bg-gradient-to-b from-[#d9d9d9] to-[#f0f0f0] ${width}`}>
    <div className={`flex h-[117px] items-center pt-1 ${pad}`}>
      {groups.map((g, gi) => (
        <React.Fragment key={gi}>
          {gi > 0 && <i className="mx-[9px] h-[98px] w-[2px] shrink-0 bg-gradient-to-b from-transparent via-[#a8a8a8] to-transparent" />}
          {g.map((col, ci) => (
            <div key={ci} className="flex w-14 shrink-0 flex-col">
              {col.map((ic, k) => <svg key={k} className="h-14 w-14" viewBox="-28 -28 56 56">{ic}</svg>)}
            </div>
          ))}
        </React.Fragment>
      ))}
    </div>
    <div className="flex flex-1 items-center bg-gradient-to-b from-[#3b3b3b] to-[#242424] pr-[5px]">
      <span className="flex-1 text-center text-[20px] leading-6 tracking-[-0.3px] text-[#ececec]">{label}</span>
      <svg width="13" height="16" viewBox="0 0 13 16"><path d="M6.500 2V8" stroke="#a0a0a0" strokeWidth="3.500" /><path d="M0 7.500H13L6.500 15Z" fill="#a0a0a0" /></svg>
    </div>
  </div>
);

const ghTabs: [string, string][] = [
  ["Maths", "w-[88px]"], ["Sets", "w-[72px]"], ["Vector", "w-[90px]"], ["Curve", "w-[86px]"], ["Surface", "w-[105px]"], ["Mesh", "w-[81px]"],
  ["Intersect", "w-[114px]"], ["Transform", "w-[127px]"], ["Display", "w-[101px]"], ["PanelingTools", "w-[168px]"], ["Kangaroo2", "w-[120px]"],
];

const Btn = ({ w, children, on }: { w: string; children: React.ReactNode; on?: boolean }) => (
  <div className={`flex h-10 shrink-0 items-center justify-center rounded-[9px] shadow-[0_1px_3px_rgba(0,0,0,0.28)] ${on ? "bg-gradient-to-b from-[#4d92fa] to-[#2f71f6]" : "bg-white"} ${w}`}>{children}</div>
);
const I32 = ({ children }: { children: React.ReactNode }) => <svg width="34" height="34" viewBox="-17 -17 34 34">{children}</svg>;
const Sep = ({ cls }: { cls: string }) => <i className={`h-8 w-[2px] shrink-0 bg-[#dcdcdc] ${cls}`} />;

/* ---------- definition canvas ---------- */

const X0 = 1355, Y0 = 550;

const wire = (x1: number, y1: number, x2: number, y2: number) => {
  const m = (x1 + x2) / 2;
  return `M${x1} ${y1}C${m} ${y1} ${m} ${y2} ${x2} ${y2}`;
};

const Ports = ({ x, ys, side }: { x: number; ys: number[]; side: "l" | "r" }) => (
  <>
    {ys.map((y) => (
      <i key={y} style={{ left: (side === "l" ? x - 9 : x - 2) - X0, top: y - 9.500 - Y0 }}
        className={`absolute h-[19px] w-[11px] border-[3px] border-black bg-white ${side === "l" ? "rounded-l-full border-r-0" : "rounded-r-full border-l-0"}`} />
    ))}
  </>
);

interface NodeProps { x: number; y: number; w: number; h: number; ins: [string, number][]; outs: [string, number][]; icon: React.ReactNode; off?: boolean; label?: string; warn?: boolean }

const Node = ({ x, y, w, h, ins, outs, icon, off, label, warn }: NodeProps) => (
  <>
    {label && (
      <div style={{ left: x + 11 - X0, top: y + h - 4 - Y0 }} className="absolute flex h-[31px] w-[95px] items-end justify-center rounded-b-[6px] bg-[#3f3f3f] text-[21px] leading-6 tracking-[-0.2px] text-white">{label}</div>
    )}
    <Ports x={x} ys={ins.map((p) => p[1])} side="l" />
    <Ports x={x + w} ys={outs.map((p) => p[1])} side="r" />
    <div style={{ left: x - X0, top: y - Y0, width: w, height: h }}
      className={`absolute rounded-[7px] border-2 shadow-[0_-2px_0_rgba(255,255,255,0.8)] ${off ? "border-[#6a6a6a] bg-[linear-gradient(#d8d8d8,#b4b4b4_19%,#a2a2a2_20%,#8a8a8a)] text-[#5e5e5e]" : "border-[#333] bg-[linear-gradient(#fff,#f0f0f0_13%,#e6e6e6_14%,#d0d0d0)] text-black"}`}>
      {warn && <i className="absolute left-[10px] top-0 h-[3px] w-[16px] border-t-[3px] border-dashed border-[#aaa]" />}
      {ins.map(([t, py]) => <span key={t} style={{ top: py - y - 10 }} className="absolute left-[7px] w-4 text-center text-[19.5px] leading-6">{t}</span>)}
      {outs.map(([t, py]) => <span key={t} style={{ top: py - y - 10 }} className="absolute right-[15px] w-4 text-center text-[19.5px] leading-6">{t}</span>)}
      <svg className={`absolute left-1/2 top-1/2 h-[44px] w-[44px] -translate-x-1/2 -translate-y-1/2 ${off ? "opacity-50" : ""}`} viewBox="-22 -22 44 44">{icon}</svg>
    </div>
  </>
);

const Dot = ({ x, y }: { x: number; y: number }) => <circle cx={x} cy={y} r="3.300" fill="#fff" stroke="#333" strokeWidth="2" />;
const divideIcon = <g transform="translate(-3 1)"><path d="M-15 16L-3 10Q0 2 1 -8L13 -14" fill="none" stroke="#a51c14" strokeWidth="4.500" /><Dot x={-15} y={16} /><Dot x={-3} y={10} /><Dot x={1} y={-7} /><Dot x={13} y={-14} /></g>;
const lineIcon = <g transform="translate(-1 0)"><path d="M-14 13L13 -13" stroke="#222" strokeWidth="3.800" /><Dot x={-14} y={13} /><Dot x={13} y={-13} /></g>;
const closestIcon = <g transform="translate(-4 0)"><path d="M-18 15L-11 -12" stroke="#e0301e" strokeWidth="2.800" /><path d="M-18 15L4 -10M-18 15H8" stroke="#999" strokeWidth="2" /><path d="M4 -20Q7 -4 19 -4" fill="none" stroke="#111" strokeWidth="4" /><circle cx="-11" cy="-11" r="6.500" fill="#eee" stroke="#555" strokeWidth="2" /><circle cx="11" cy="14" r="8" fill="#f2f2f2" stroke="#555" strokeWidth="2" /><Dot x={-17} y={15} /></g>;
const arcIcon = <g transform="translate(-3 0)"><path d="M-13 3Q-16 -11 0 -13Q16 -11 16 1" fill="none" stroke="#111" strokeWidth="4.200" /><path d="M-13 2L-10 13" stroke="#222" strokeWidth="2" /><Dot x={-14} y={2} /><Dot x={15} y={2} /><Dot x={-10} y={13} /></g>;

const Slider = ({ x, y, w, lw, label, line, knob }: { x: number; y: number; w: number; lw: number; label: string; line: [number, number]; knob: number }) => (
  <>
    <Ports x={x + w} ys={[y + 22]} side="r" />
    <div style={{ left: x - X0, top: y - Y0, width: w }} className="absolute flex h-[44px] overflow-hidden rounded-[6px] border-2 border-[#333] bg-[linear-gradient(#fff,#ececec_40%,#d4d4d4)] shadow-[0_-2px_0_rgba(255,255,255,0.8)]">
      <span style={{ width: lw }} className="flex items-center justify-center border-r-2 border-[#555] bg-[linear-gradient(#e2e2ea,#b2b2c0_45%,#a2a2b0)] pr-[2px] pt-[6px] text-[20px] leading-6 tracking-[0.1px] text-black">{label}</span>
    </div>
    <svg style={{ left: x - X0, top: y - Y0, width: w }} className="absolute h-[44px]" viewBox={`${x} ${y} ${w} 44`}>
      <path d={`M${line[0]} ${y + 22.500}H${line[1]}` + Array.from({ length: 11 }, (_, i) => i === 1 || i === 2 ? "" : `M${line[0] + (line[1] - line[0]) * i / 10} ${y + 23}v${i % 5 ? -8 : -12}`).join("")} fill="none" stroke="#b0b0b0" strokeWidth="1.300" />
      <path d={`M${knob} ${y + 15}L${knob + 7} ${y + 22}L${knob} ${y + 29}L${knob - 7} ${y + 22}Z`} fill="#fff" stroke="#000" strokeWidth="2.600" />
      <text x={knob + 10} y={y + 32.500} fontSize="21" fontFamily="Inter, sans-serif" fill="#000">12</text>
    </svg>
  </>
);

const Canvas = () => (
  <div className="relative ml-[2px] h-[1285px] w-[1577px] overflow-hidden bg-[#dbd8d1]">
    <svg className="absolute inset-0 h-full w-full" viewBox="1355 550 1577 1285">
      {[1553.5, 1862, 2170.6, 2479, 2787.5].map((x) => <path key={x} d={`M${x} 550V1835`} stroke="#c0bdb6" strokeWidth="2" />)}
      {Array.from({ length: 12 }, (_, i) => <path key={i} d={`M1355 ${621 + 102.800 * i}H2932`} stroke="#c3c0b9" strokeWidth="2" />)}
      <g fill="none" stroke="#000" strokeOpacity="0.600" strokeWidth="6">
        <path d={wire(1920, 845, 1990, 845)} />
        <path d={wire(2108, 845, 2280, 715)} />
        <path d={wire(2108, 845, 2279, 909)} />
        <path d={wire(1834, 1262, 1916, 1262)} />
      </g>
      <g fill="none" stroke="#000" strokeOpacity="0.600" strokeWidth="10">
        {[[2411, 674, 2699, 762], [2409, 867, 2699, 804], [2046, 1221, 2155, 1159], [2046, 1221, 2155, 1332], [2046, 1221, 2591, 1141],
          [2287, 1159, 2591, 1100], [2287, 1159, 2568, 1398], [2287, 1332, 2591, 1182], [2287, 1332, 2568, 1439]].map((p, i) => <path key={i} d={wire(p[0], p[1], p[2], p[3])} />)}
      </g>
    </svg>
    <Slider x={1504} y={823} w={408} lw={90} label="Integer" line={[1614, 1891]} knob={1648} />
    <Slider x={1500} y={1240} w={326} lw={78} label="Count" line={[1598.500, 1804]} knob={1621.500} />
    <Ports x={1997} ys={[845]} side="l" />
    <Ports x={2101} ys={[845]} side="r" />
    <div style={{ left: 1997 - X0, top: 819 - Y0 }} className="absolute flex h-[51px] w-[104px] items-center justify-center rounded-[6px] border-2 border-[#333] bg-[linear-gradient(#e8e8f0,#c4c4d0_45%,#a4a4b2)] pt-[3px] shadow-[0_-2px_0_rgba(255,255,255,0.8)]">
      <svg className="h-[46px] w-[50px]" viewBox="-25 -23 50 46"><Hex><text y="12" textAnchor="middle" fontSize="36" fontWeight="bold" fill="#fff" fontFamily="Liberation Serif, serif">7</text></Hex></svg>
    </div>
    <Node x={2287} y={648} w={116} h={134} warn ins={[["C", 674], ["N", 715], ["K", 756]]} outs={[["P", 674], ["T", 715], ["t", 756]]} icon={divideIcon} />
    <Node x={2285} y={841} w={117} h={134} warn ins={[["C", 867], ["N", 908.500], ["K", 950]]} outs={[["P", 867], ["T", 908.500], ["t", 950]]} icon={divideIcon} />
    <Node x={2705} y={737} w={114} h={92} ins={[["A", 762], ["B", 803.500]]} outs={[["L", 783]]} icon={lineIcon} />
    <Node x={1922} y={1195} w={117} h={134} warn ins={[["C", 1221], ["N", 1262], ["K", 1303]]} outs={[["P", 1221], ["T", 1262], ["t", 1303]]} icon={divideIcon} />
    <Node x={2162} y={1133} w={118} h={93} label="Closest" ins={[["P", 1159], ["G", 1200]]} outs={[["P", 1159], ["D", 1200]]} icon={closestIcon} />
    <Node x={2162} y={1306} w={118} h={93} label="Closest" ins={[["P", 1332], ["G", 1373]]} outs={[["P", 1332], ["D", 1373]]} icon={closestIcon} />
    <Node x={2597} y={1074} w={117} h={133} ins={[["A", 1100], ["B", 1141], ["C", 1182]]} outs={[["A", 1100], ["P", 1141], ["R", 1182]]} icon={arcIcon} />
    <Node x={2575} y={1372} w={115} h={92} off ins={[["A", 1398], ["B", 1439]]} outs={[["L", 1418]]} icon={lineIcon} />
    <div className="absolute bottom-0 left-0 h-[56px] w-[13px] border-y-2 border-r-2 border-black bg-[linear-gradient(#f0f0f0,#b8b8b8_38%,#9a9a9a_40%,#8a8a8a)]" />
    <svg className="absolute bottom-[9px] right-[7px] h-[110px] w-[110px]" viewBox="-60 -60 110 110">
      <path d="M-50 -40L-37 -36Q-22 -44 -10 -44L-4 -47L2 -42V-34L-38 -10Q-43 -20 -35 -27L-46 -27Z" fill="#000" />
      <circle r="40" fill="#fff" stroke="#333" strokeWidth="2.500" />
      <circle r="35.500" fill="url(#knob)" />
      <path d="M-30 -28L-22 -17L-33 -17Z M30 -28L16 -21L28 -13Z M-30 28L-19 21L-24 18L-32 20Z M30 28L20 18L31 17Z" fill="#fff" />
    </svg>
  </div>
);

const Light = ({ c }: { c: string }) => <i className={`h-6 w-6 rounded-full border ${c}`} />;

const Grasshopper = () => (
  <div className="absolute left-[1352px] top-[211px] flex h-[1675px] w-[1583px] flex-col overflow-hidden rounded-[18px] border border-[#a2a2a2] bg-[#f4f4f4] shadow-[0_18px_70px_12px_rgba(0,0,0,0.420)]">
    <div className="flex h-[56px] items-center gap-4 bg-[#fafafa] pl-[15px]">
      <Light c="border-[#d65549] bg-[#ec6a5e]" />
      <Light c="border-[#d9a23c] bg-[#f4bf4f]" />
      <Light c="border-[#4fae42] bg-[#61c554]" />
      <span className="mr-[137px] flex-1 text-center text-[26px] font-bold leading-8 tracking-[-0.1px] text-[#484848]">Grasshopper - curve line via grasshopper*</span>
    </div>
    <div className="relative flex h-[43px] border-t border-[#c4c4c4] bg-[#ececec]">
      <div className="absolute inset-x-[2px] bottom-[-5px] h-[6px] rounded-t-[10px] border-t-2 border-[#9c9c9c]" />
      <div className="relative z-10 h-[46px] w-[104px] rounded-t-[10px] border-x-[1.5px] border-t-[1.5px] border-[#8c8c8c] border-l-[#bbb] bg-gradient-to-b from-white via-white to-[#e0e0e0] pl-[10px] pt-[1px] text-[22.5px] leading-[34px] tracking-[-0.2px] text-[#1e1e1e]">Params</div>
      <div className="flex pl-[12px]">
        {ghTabs.map(([t, w]) => <span key={t} className={`${w} pt-[6px] text-[22px] leading-8 tracking-[-0.5px] text-[#6e6e6e]`}>{t}</span>)}
      </div>
    </div>
    <div className="h-[178px] bg-gradient-to-b from-[#dcdcdc] via-[#ececec] via-85% to-[#ececec]">
      <div className="flex gap-[7px] pl-[4px] pt-[5px]">
        <Panel label="Geometry" groups={geo} width="w-[385px]" pad="pl-[3px]" />
        <Panel label="Primitive" groups={prim} width="w-[122px]" pad="pl-[3px]" />
        <Panel label="Input" groups={input} width="w-[273px]" pad="pl-[2px]" />
        <Panel label="Util" groups={util} width="w-[217px]" pad="pl-[2px]" />
      </div>
    </div>
    <div className="flex h-[61px] items-center border-t-2 border-[#dcdcdc] bg-[#f4f4f4] pb-[1px] pl-[2px]">
      <Btn w="w-[51px]"><I32><path d="M-10 -2V-13L-6 -15H4L8 -11V-2" fill="#f2f2f2" stroke="#999" strokeWidth="1.500" /><path d="M-13 14V-1L-3 -1L0 -5H12V12L10 14Z" fill="#7cc04a" stroke="#4a8a24" strokeWidth="1.500" /></I32></Btn>
      <Btn w="ml-[5px] w-[51px]"><I32><rect x="-14" y="-14" width="28" height="28" rx="2" fill="#2f66d6" stroke="#1a3c98" strokeWidth="1.500" /><rect x="-9" y="-13" width="18" height="13" fill="#f2f6ff" /><path d="M-6 -9H6M-6 -5H6" stroke="#9ab" strokeWidth="1.500" /><rect x="-7" y="5" width="14" height="9" fill="#dfe6f5" /><rect x="-4" y="7" width="5" height="7" fill="#1a3c98" /></I32></Btn>
      <Sep cls="mx-[8px]" />
      <Btn w="w-[120px] justify-end pr-[4px]"><span className="w-[71px] text-[24.5px] leading-8 tracking-[-0.8px] text-[#222]">103%</span><span className="flex h-8 w-8 items-center justify-center rounded-lg bg-gradient-to-b from-[#4d92fa] to-[#2f71f6]"><svg width="16" height="10" viewBox="0 0 16 10"><path d="M2 2L8 8L14 2" fill="none" stroke="#fff" strokeWidth="3" strokeLinecap="round" strokeLinejoin="round" /></svg></span></Btn>
      <Btn w="ml-[5px] w-[63px]"><I32><path d="M-13 -4V-12H-4M4 -12H13V-4M13 4V12H4M-4 12H-13V4" fill="none" stroke="#1c1c1c" strokeWidth="5.500" /><path d="M-3 -3L3 3M3 -3L-3 3" stroke="#222" strokeWidth="3" /></I32></Btn>
      <Btn w="ml-[22px] w-[64px]"><I32><path d="M-14 0Q0 -16 14 0Q0 16 -14 0Z" fill="#fff" stroke="#777" strokeWidth="1.800" /><circle r="8.500" fill="#54a8d8" stroke="#2a6a98" /><circle r="4" fill="#0c1c30" /></I32></Btn>
      <Btn w="ml-[20px] w-[52px]"><I32><path d="M-2 4Q6 -8 13 -12Q15 -2 12 4L4 9Z" fill="#e0402c" stroke="#b8281a" /><path d="M-13 -2Q-11 3 -11 6Q-11 10 -13 12Q-8 14 -4 12Q2 10 3 8L-1 4Q-4 6 -5 9" fill="none" stroke="#4a2a18" strokeWidth="2.200" /></I32></Btn>
      <div className="flex-1" />
      <Btn w="w-[52px]"><I32><path d="M0 -14L7 -7L7 2L5 6H-5L-8 0L-6 -9Z" fill="#e4e4e4" stroke="#999" strokeWidth="1.500" /><ellipse cy="7" rx="10.500" ry="6.500" fill="#2c2c2c" /></I32></Btn>
      <Btn w="ml-[2px] w-[52px]"><I32><path d="M1 -14L12 -9L14 -1L2 14L-11 9L-14 2Z" fill="#fff" stroke="#888" strokeWidth="2" /><path d="M-9 5L1 -9M1 9L10 -4" stroke="#999" strokeWidth="4.500" strokeLinecap="round" /></I32></Btn>
      <Btn on w="ml-[2px] w-[52px]"><I32><path d="M1 -14L12 -9L14 -1L2 14L-11 9L-14 2Z" fill="url(#redm)" stroke="#5e0c06" strokeWidth="1.500" /></I32></Btn>
      <Sep cls="mx-[14px]" />
      <Btn w="w-[52px]"><I32><path d="M-7 -9L1 -14L10 -9L13 -1L5 12L-4 10Q-1 0 -7 -9Z" fill="url(#teal)" stroke="#14605a" strokeWidth="1.500" /><path d="M-13 -13Q-4 -8 -5 4Q-4 12 9 14" fill="none" stroke="#777" strokeWidth="1.500" /></I32></Btn>
      <Btn w="ml-px w-[51px]"><I32><path d="M-14 4L-8 -2L6 12L0 14L-10 11Z" fill="#ddd" stroke="#999" /><path d="M-7 -6L2 -14L11 -10L14 -2L8 8Z" fill="url(#leaf)" stroke="#2f5a10" strokeWidth="1.500" /><path d="M-11 -9L10 12" stroke="#333" strokeWidth="2" /></I32></Btn>
      <Btn w="ml-px w-[51px]"><I32><circle r="13" fill="url(#ball)" stroke="#777" /><path d="M0 -13A13 13 0 0 0 0 13Z" fill="#e39330" stroke="#8a5010" /></I32></Btn>
      <Sep cls="mx-[4px]" />
      <Btn w="mr-[18px] w-[64px]"><I32><circle r="10.500" fill="#78b4f4" stroke="#24489c" strokeWidth="2.200" /><circle cx="-3" cy="-3" r="4" fill="#c4e2ff" /></I32></Btn>
    </div>
    <Canvas />
    <div className="flex flex-1 items-center border-t-[3px] border-[#dcdcdc] bg-[#f4f4f4] pb-[2px] pl-[2px] text-[#1f1f1f]">
      <svg width="34" height="34" viewBox="-17 -17 34 34"><circle r="15.500" fill="url(#info)" stroke="#141f86" strokeWidth="1.500" /><path d="M-3.500 -11H3.500L2.500 3H-2.500Z" fill="#10208a" stroke="#fff" strokeWidth="1.800" /><circle cy="8.500" r="3" fill="#10208a" stroke="#fff" strokeWidth="1.800" /></svg>
      <span className="-mt-[3px] ml-[3px] flex-1 text-[24.5px] leading-8 tracking-[-0.32px]">Autosave complete (120 seconds ago)</span>
      <span className="-mt-[3px] mr-[139px] text-[24.5px] leading-8 tracking-[-0.2px]">1.0.0007</span>
    </div>
  </div>
);

/* ---------- main window ---------- */

const tabs: [string, string][] = [
  ["Standard", "w-[128px]"], ["CPlanes", "w-[118px]"], ["Set View", "w-[125px]"], ["Display", "w-[111px]"], ["Select", "w-[102px]"], ["Viewport Layout", "w-[197px]"],
  ["Visibility", "w-[124px]"], ["Transform", "w-[137px]"], ["Curve Tools", "w-[152px]"], ["Surface Tools", "w-[170px]"], ["Solid Tools", "w-[145px]"], ["SubD Tools", "w-[146px]"],
  ["Mesh Tools", "w-[145px]"], ["Render Tools", "w-[164px]"], ["Drafting", "w-[120px]"], ["New in V7", "w-[134px]"],
];

const modes: [string, string, boolean][] = [
  ["Grid Snap", "w-[162px]", true], ["Ortho", "ml-[20px] w-[113px]", false], ["Planar", "ml-[22px] w-[118px]", false],
  ["SmartTrack", "ml-[18px] w-[184px]", true], ["Gumball", "ml-[16px] w-[143px]", false], ["History", "ml-[20px] w-[128px]", false],
];

const VBar = ({ cls }: { cls: string }) => <i className={`h-7 w-[2px] shrink-0 bg-[#6f6f6f] ${cls}`} />;

export default function App() {
  return (
    <div className="relative h-[1886px] w-[2936px] overflow-hidden bg-[#14181f] font-['Inter',sans-serif]">
      <Defs />
      <div className="ml-[2px] flex h-[1886px] flex-col overflow-hidden rounded-[18px] bg-[#ececec]">
        <div className="flex h-[52px] items-center gap-4 pl-[16px]">
          <Light c="border-[#bcbcbc] bg-[#d3d3d3]" />
          <Light c="border-[#bcbcbc] bg-[#d3d3d3]" />
          <Light c="border-[#bcbcbc] bg-[#d3d3d3]" />
          <div className="ml-[1112px] flex items-center gap-[11px] pb-[2px]">
            <svg width="24" height="31" viewBox="0 0 24 31"><path d="M1 1H17L23 7V30H1Z" fill="#f6f6f6" stroke="#ccc" /><path d="M3 3L6 9L9 5L12 12L17 14L20 19L20 23L14 22L12 26L9 18L4 13Z" fill="#8a8a8a" /><path d="M7 27H17" stroke="#ccc" strokeWidth="3" /></svg>
            <span className="text-[25.5px] font-bold leading-8 tracking-[-0.02px] text-[#adadad]">curve line via grasshopper.3dm</span>
          </div>
        </div>
        <div className="flex h-[62px] items-center pb-[10px] pl-[24px]">
          <div className="h-[40px] w-[40px] border-[3px] border-l-[12px] border-[#b4b4b4]" />
          <div className="ml-[77px] flex">
            {modes.map(([t, w, on]) => (
              <span key={t} className={`flex h-[30px] items-center justify-center rounded-[7px] text-[22.5px] font-bold ${on ? "bg-[#c9c9c9] text-[#adadad]" : "text-[#b0b0b0]"} ${w}`}>{t}</span>
            ))}
          </div>
          <svg className="ml-[600px]" width="48" height="46" viewBox="0 0 48 46"><g fill="none" stroke="#b6b6b6" strokeWidth="2"><ellipse cx="23" cy="8" rx="16" ry="4" /><path d="M7 8L20 24V38Q23 42 27 38V24L39 8M38 2H45V8M2 37V43H9" /></g></svg>
          <svg className="ml-[27px]" width="40" height="38" viewBox="0 0 40 38"><circle cx="18" cy="19" r="17" fill="none" stroke="#dadada" strokeWidth="2" /><path d="M14 15h8v8h-8zM20 18h19v3H20z" fill="#c9c9c9" /></svg>
          <svg className="ml-[22px]" width="42" height="42" viewBox="0 0 42 42"><g fill="none" stroke="#c9c9c9" strokeWidth="2"><circle cx="21" cy="21" r="20" /><circle cx="21" cy="21" r="10" /></g></svg>
          <div className="ml-[20px] flex h-[36px] w-[386px] items-center rounded-[7px] border-2 border-[#dddddd] pl-[6px]">
            <i className="h-[28px] w-[28px] bg-[#878787]" />
            <span className="flex-1 pr-[4px] text-center text-[21px] leading-6 text-[#d0d0d0]">Default</span>
          </div>
          <div className="ml-auto mr-[24px] h-[40px] w-[39px] border-[3px] border-r-[11px] border-[#b4b4b4]" />
        </div>
        <div className="flex h-[34px] shrink-0 border-b-2 border-t-2 border-b-[#8c8c8c] border-t-[#b4b4b4] bg-[#e5e5e5] pl-[14px]">
          {tabs.map(([t, w], i) => (
            <span key={t} className={`-my-[2px] flex items-center justify-center rounded-tr-[8px] border-r-[1.5px] border-t-2 border-[#8f8f8f] pb-[4px] text-[18px] font-bold leading-none tracking-[0px] text-[#ababab] ${w} ${i ? "border-b-2" : "rounded-tl-[8px] border-l-[1.5px] bg-[#ececec]"}`}>{t}</span>
          ))}
        </div>
        <Toolbar />
        <div className="flex h-[1622px] border-t-2 border-[#d2d2d2]">
          <div className="flex w-[302px] flex-col border-r-2 border-[#858585] bg-[#f1f1f1]">
            <div className="h-[52px] border-b-2 border-[#c6c6c6] bg-gradient-to-b from-[#f6f6f6] to-[#e0e0e0]" />
            <div className="ml-[18px] mt-[21px] h-[40px] w-[265px] border border-b-2 border-[#d8d8d8] border-b-[#b2b2b2] bg-white pl-[6px] text-[25.5px] leading-[37px] tracking-[0px] text-[#bdbdbd]">Command</div>
            <div className="mt-[16px]"><Palette /></div>
            <div className="border-t-[3px] border-[#7f7f7f] pt-[10px]">
              <Radio label="Persistent" on />
              <Radio label="One shot" />
              <div className="pt-[6px]">{snaps.map(([l, on, off]) => <Check key={l} label={l} on={on} off={off} />)}</div>
              <div className="pt-[36px]"><Check label="Disable all" /></div>
            </div>
          </div>
          <div className="flex flex-1 flex-col">
            <div className="flex h-[50px] shrink-0 items-center bg-gradient-to-b from-[#fafafa] to-[#e4e4e4] pb-[2px] pl-[20px] text-[24.5px] leading-8 text-[#666]">
              <svg width="31" height="28" viewBox="0 0 31 28"><path d="M1 1H30V27H1ZM15.500 1V27M1 14H30" fill="none" stroke="#4a86f0" strokeWidth="1.800" /><path d="M2 3H8M16 3H22M2 16H8M16 16H22" stroke="#2f6fe8" strokeWidth="2" /></svg>
              <svg className="ml-[33px]" width="31" height="28" viewBox="0 0 31 28"><path d="M1 1H30V27H1Z" fill="none" stroke="#999" strokeWidth="1.800" /><path d="M2 3H8" stroke="#777" strokeWidth="2" /></svg>
              <VBar cls="ml-[27px]" /><span className="ml-[37px] w-[145px] tracking-[0.25px]">Perspective</span>
              <VBar cls="ml-[39px]" /><span className="ml-[37px] w-[47px] text-[#2f6fe8]">Top</span>
              <VBar cls="ml-[38px]" /><span className="ml-[38px] w-[66px]">Front</span>
              <VBar cls="ml-[38px]" /><span className="ml-[38px] w-[66px]">Right</span>
              <VBar cls="ml-[38px]" /><span className="ml-[37px] tracking-[0.2px]">Layouts...</span>
            </div>
            <div className="relative h-[723px] w-[1044px] border-t-2 border-[#6c6c6c] bg-[#9da3ab]"><TopView /><ViewLabel>Top</ViewLabel></div>
            <div className="h-[6px] w-[1044px] bg-[#d9d9d9]" />
            <div className="relative h-[841px] w-[1044px] bg-[#9da3ab]"><FrontView /><ViewLabel>Front</ViewLabel></div>
          </div>
        </div>
        <div className="flex flex-1 items-center bg-[#d6d6d6] pl-[11px] pt-[4px]">
          <svg width="26" height="20" viewBox="0 0 26 20"><path d="M0 2h2M0 10h2M0 18h2M6 2h20M6 10h20M6 18h20" stroke="#777" strokeWidth="2" /></svg>
          <span className="ml-[6px] text-[22px] leading-8 tracking-[0.1px] text-[#222]">Command: _Grasshopper</span>
        </div>
      </div>
      <div className="pointer-events-none absolute left-[2px] top-0 h-[1886px] w-[90px] bg-gradient-to-r from-black/12 to-transparent" />
      <Grasshopper />
    </div>
  );
}
